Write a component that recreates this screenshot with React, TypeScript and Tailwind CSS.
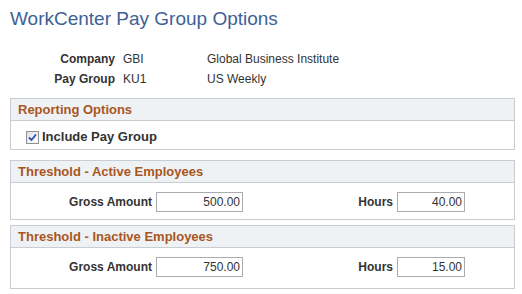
import React from "react";

const font = { fontFamily: '"Liberation Sans", Arial, sans-serif' };

function Section({ title, children, className = "" }: { title: string; children: React.ReactNode; className?: string }) {
  return (
    <div className={"ml-[10px] w-[505px] border border-[#c9cdd2] " + className}>
      <div className="h-[22px] bg-[#eef2f4] border-b border-[#c9cdd2] pl-[7px] flex items-center text-[13px] font-bold text-[#a9561f] leading-none">
        {title}
      </div>
      {children}
    </div>
  );
}

function NumInput({ value, w }: { value: string; w: string }) {
  return (
    <div className={"h-[20px] border border-[#a9abad] bg-white flex items-center justify-end pr-[2px] text-[12px] text-[#333] " + w}>
      {value}
    </div>
  );
}

function ThresholdBody({ gross, hours, h }: { gross: string; hours: string; h: string }) {
  return (
    <div className={"pt-[9px] flex items-start " + h}>
      <div className="w-[141px] h-[20px] flex items-center justify-end text-[12px] font-bold text-[#333]">Gross Amount</div>
      <div className="ml-[4px]">
        <NumInput value={gross} w="w-[87px]" />
      </div>
      <div className="w-[150px] h-[20px] flex items-center justify-end text-[12px] font-bold text-[#333]">Hours</div>
      <div className="ml-[4px]">
        <NumInput value={hours} w="w-[68px]" />
      </div>
    </div>
  );
}

export default function App() {
  return (
    <div className="w-[522px] h-[294px] bg-white overflow-hidden" style={font}>
      <div className="pt-[7px] pl-[10px] text-[19px] leading-[23px] text-[#3e6196]">WorkCenter Pay Group Options</div>
      <div className="mt-[19px] text-[12px] text-[#333]">
        <div className="h-[20px] flex items-center">
          <div className="w-[115px] text-right font-bold">Company</div>
          <div className="ml-[8px] w-[84px]">GBI</div>
          <div>Global Business Institute</div>
        </div>
        <div className="h-[20px] flex items-center">
          <div className="w-[115px] text-right font-bold">Pay Group</div>
          <div className="ml-[8px] w-[84px]">KU1</div>
          <div>US Weekly</div>
        </div>
      </div>
      <Section title="Reporting Options" className="mt-[9px]">
        <div className="h-[28px] flex items-center pl-[15px] pt-[4px]">
          <span className="w-[13px] h-[13px] border border-[#8c8f94] bg-[linear-gradient(135deg,#dcdfe6,#ffffff)] flex items-center justify-center">
            <svg width="9" height="9" viewBox="0 0 9 9">
              <path d="M1 4.5 L3.5 7 L8 1.5" fill="none" stroke="#2b4fb0" strokeWidth="1.8" />
            </svg>
          </span>
          <span className="ml-[3px] text-[13px] font-bold text-[#333]">Include Pay Group</span>
        </div>
      </Section>
      <Section title="Threshold - Active Employees" className="mt-[10px]">
        <ThresholdBody gross="500.00" hours="40.00" h="h-[36px]" />
      </Section>
      <Section title="Threshold - Inactive Employees" className="mt-[5px]">
        <ThresholdBody gross="750.00" hours="15.00" h="h-[40px]" />
      </Section>
    </div>
  );
}
